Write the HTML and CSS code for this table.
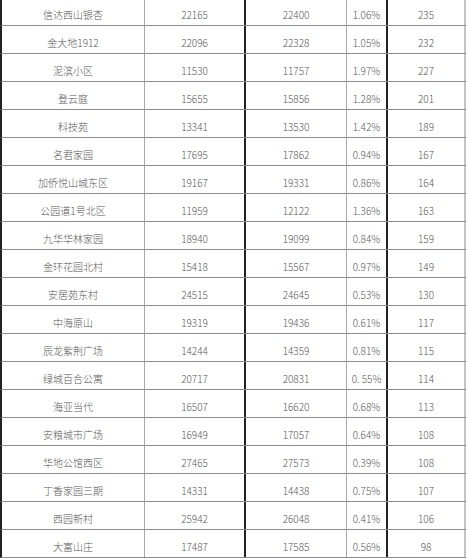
FILE: index.html
```html
<!DOCTYPE html>
<html lang="zh">
<head>
<meta charset="utf-8">
<link rel="stylesheet" href="styles.css">
</head>
<body>
<div class="table">
  <div class="row"><div class="c c1">信达西山银杏</div><div class="c c2">22165</div><div class="c c3">22400</div><div class="c c4">1.06%</div><div class="c c5">235</div></div>
  <div class="row"><div class="c c1">金大地1912</div><div class="c c2">22096</div><div class="c c3">22328</div><div class="c c4">1.05%</div><div class="c c5">232</div></div>
  <div class="row"><div class="c c1">泥滨小区</div><div class="c c2">11530</div><div class="c c3">11757</div><div class="c c4">1.97%</div><div class="c c5">227</div></div>
  <div class="row"><div class="c c1">登云庭</div><div class="c c2">15655</div><div class="c c3">15856</div><div class="c c4">1.28%</div><div class="c c5">201</div></div>
  <div class="row"><div class="c c1">科技苑</div><div class="c c2">13341</div><div class="c c3">13530</div><div class="c c4">1.42%</div><div class="c c5">189</div></div>
  <div class="row"><div class="c c1">名君家园</div><div class="c c2">17695</div><div class="c c3">17862</div><div class="c c4">0.94%</div><div class="c c5">167</div></div>
  <div class="row"><div class="c c1">加侨悦山城东区</div><div class="c c2">19167</div><div class="c c3">19331</div><div class="c c4">0.86%</div><div class="c c5">164</div></div>
  <div class="row"><div class="c c1">公园道1号北区</div><div class="c c2">11959</div><div class="c c3">12122</div><div class="c c4">1.36%</div><div class="c c5">163</div></div>
  <div class="row"><div class="c c1">九华华林家园</div><div class="c c2">18940</div><div class="c c3">19099</div><div class="c c4">0.84%</div><div class="c c5">159</div></div>
  <div class="row"><div class="c c1">金环花园北村</div><div class="c c2">15418</div><div class="c c3">15567</div><div class="c c4">0.97%</div><div class="c c5">149</div></div>
  <div class="row"><div class="c c1">安居苑东村</div><div class="c c2">24515</div><div class="c c3">24645</div><div class="c c4">0.53%</div><div class="c c5">130</div></div>
  <div class="row"><div class="c c1">中海原山</div><div class="c c2">19319</div><div class="c c3">19436</div><div class="c c4">0.61%</div><div class="c c5">117</div></div>
  <div class="row"><div class="c c1">辰龙紫荆广场</div><div class="c c2">14244</div><div class="c c3">14359</div><div class="c c4">0.81%</div><div class="c c5">115</div></div>
  <div class="row"><div class="c c1">绿城百合公寓</div><div class="c c2">20717</div><div class="c c3">20831</div><div class="c c4">0. 55%</div><div class="c c5">114</div></div>
  <div class="row"><div class="c c1">海亚当代</div><div class="c c2">16507</div><div class="c c3">16620</div><div class="c c4">0.68%</div><div class="c c5">113</div></div>
  <div class="row"><div class="c c1">安粮城市广场</div><div class="c c2">16949</div><div class="c c3">17057</div><div class="c c4">0.64%</div><div class="c c5">108</div></div>
  <div class="row"><div class="c c1">华地公馆西区</div><div class="c c2">27465</div><div class="c c3">27573</div><div class="c c4">0.39%</div><div class="c c5">108</div></div>
  <div class="row"><div class="c c1">丁香家园三期</div><div class="c c2">14331</div><div class="c c3">14438</div><div class="c c4">0.75%</div><div class="c c5">107</div></div>
  <div class="row"><div class="c c1">西园新村</div><div class="c c2">25942</div><div class="c c3">26048</div><div class="c c4">0.41%</div><div class="c c5">106</div></div>
  <div class="row"><div class="c c1">大富山庄</div><div class="c c2">17487</div><div class="c c3">17585</div><div class="c c4">0.56%</div><div class="c c5">98</div></div>
</div>
</body>
</html>
```

FILE: styles.css
```css
html, body {
  margin: 0;
  padding: 0;
  background: #ffffff;
  overflow: hidden;
}
.table {
  margin-top: -2px;
  width: 466px;
  font-family: "Noto Sans CJK SC", "Liberation Sans", sans-serif;
  font-size: 10px;
  font-weight: 300;
  color: #555555;
}
.row {
  display: grid;
  grid-template-columns: 143px 101px 101px 41px 78px;
  height: 28px;
  box-sizing: border-box;
  border-left: 2px solid #222222;
  border-bottom: 1px solid #8c8c8c;
}
.c {
  box-sizing: border-box;
  display: flex;
  align-items: center;
  justify-content: center;
  padding-top: 5px;
  white-space: pre;
}
.c1 { border-right: 1px solid #a8a8a8; }
.c2 { border-right: 2px solid #222222; }
.c3 { border-right: 1px solid #a8a8a8; }
.c4 { border-right: 2px solid #222222; }
.c5 { border-right: 2px solid #c4c4c4; }
```
